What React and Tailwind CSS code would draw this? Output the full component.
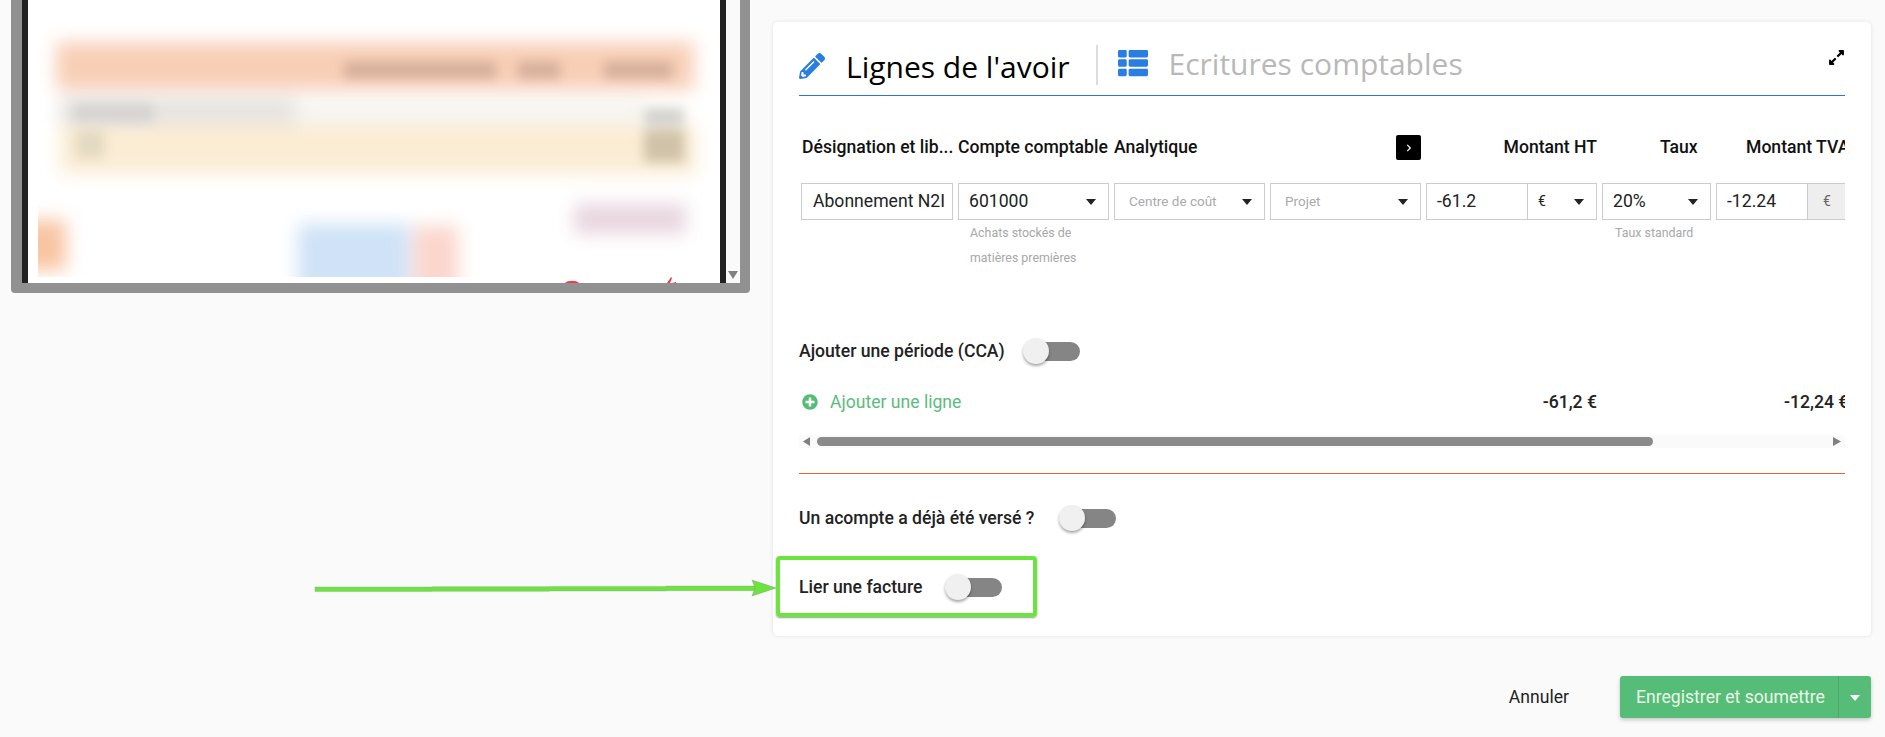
import React from "react";
import { FaPencilAlt, FaThList, FaExpandAlt, FaPlusCircle, FaChevronRight } from "react-icons/fa";

const Caret = ({ className = "text-[#222]" }) => (
  <svg width="10" height="6" viewBox="0 0 10 6" className={`shrink-0 ${className}`}>
    <path d="M0 0h10L5 6z" fill="currentColor" />
  </svg>
);

const Toggle = () => (
  <div className="relative h-[26px] w-[57px] shrink-0">
    <div className="absolute left-[6px] top-[4px] h-[19px] w-[51px] rounded-full bg-[#858585]" />
    <div className="absolute left-0 top-0 h-[26px] w-[26px] rounded-full bg-[#f0f0f0] shadow-[0_2px_3px_rgba(0,0,0,0.35)]" />
  </div>
);

const SelectBox = ({ value, placeholder }) => (
  <div className="flex h-[37px] items-center justify-between border border-[#ccc] bg-white pl-[10px] pr-[12px]">
    {placeholder ? (
      <span className="pl-[4px] text-[13.5px] text-[#aaa]">{placeholder}</span>
    ) : (
      <span className="text-[17.6px] text-[#222]">{value}</span>
    )}
    <Caret />
  </div>
);

const Hint = ({ children }) => (
  <div className="text-[12.4px] leading-[25px] text-[#a8a8a8]">{children}</div>
);

// Blurred invoice preview, coordinates are the ones of the page
const BlurredInvoice = () => (
  <svg viewBox="28 0 692 283" width="692" height="283" className="block">
    <defs>
      <filter id="soft" x="-30%" y="-60%" width="160%" height="220%">
        <feGaussianBlur stdDeviation="9" />
      </filter>
      <filter id="softer" x="-30%" y="-60%" width="160%" height="220%">
        <feGaussianBlur stdDeviation="6" />
      </filter>
      <clipPath id="page">
        <rect x="38" y="0" width="682" height="277" />
      </clipPath>
    </defs>
    <rect x="28" y="0" width="692" height="283" fill="#fff" />
    <g clipPath="url(#page)">
      <g filter="url(#soft)">
        <rect x="56" y="42" width="638" height="48" fill="#f8cfb6" />
        <rect x="60" y="98" width="240" height="28" fill="#e5e3e1" />
        <rect x="296" y="98" width="350" height="28" fill="#f7f5f3" />
        <rect x="60" y="124" width="636" height="50" fill="#fbecd4" />
        <rect x="574" y="204" width="112" height="30" fill="#e8d6df" />
        <rect x="298" y="224" width="112" height="70" fill="#cfe2f7" />
        <rect x="414" y="226" width="44" height="70" fill="#fbd6cc" />
        <rect x="20" y="220" width="46" height="50" fill="#f8c5a2" />
      </g>
      <g filter="url(#softer)">
        <rect x="344" y="62" width="152" height="16" fill="#d3ae9a" />
        <rect x="518" y="62" width="42" height="16" fill="#d3ae9a" />
        <rect x="604" y="62" width="68" height="16" fill="#d3ae9a" />
        <rect x="74" y="104" width="80" height="18" fill="#d5d3d1" />
        <rect x="644" y="108" width="40" height="18" fill="#d3d1cd" />
        <rect x="644" y="130" width="40" height="32" fill="#cfc2a8" />
        <rect x="76" y="130" width="28" height="28" fill="#e3d9c2" />
      </g>
    </g>
    <rect x="28" y="277" width="692" height="6" fill="#fff" />
    <path d="M565 283c3-3 11-3 14 0z" fill="#ef3b4b" />
    <path d="M667 283l4-6 1 1-2 5zM672 283l4-1v1z" fill="#ef3b4b" />
  </svg>
);

const PreviewPanel = () => (
  <div className="ml-[11px] flex h-[293px] w-[739px] shrink-0 rounded-b-[4px] bg-[#919191] px-[10px] pb-[10px] pl-[11px]">
    <div className="flex h-full flex-1 border-x-[6px] border-[#222] bg-white">
      <BlurredInvoice />
    </div>
    <div className="relative h-full w-[14px] bg-[#fafafa]">
      <svg width="10" height="8" viewBox="0 0 10 8" className="absolute bottom-[4px] left-[2px]">
        <path d="M0 0h10L5 8z" fill="#808080" />
      </svg>
    </div>
  </div>
);

const AccountingLines = () => (
  <div className="overflow-hidden">
    <div className="grid w-[1090px] grid-cols-[152px_151px_151px_151px_171px_109px_170px] gap-x-[5px] pl-[2px]">
      {/* column titles */}
      <div className="flex h-[25px] items-center whitespace-nowrap pl-[1px] text-[17.6px] font-medium text-[#111]">Désignation et lib...</div>
      <div className="flex h-[25px] items-center whitespace-nowrap text-[17.6px] font-medium text-[#111]">Compte comptable</div>
      <div className="col-span-2 flex h-[25px] items-center justify-between text-[17.6px] font-medium text-[#111]">
        Analytique
        <button className="flex h-[25px] w-[25px] items-center justify-center rounded-[2px] bg-black text-white">
          <FaChevronRight className="text-[8px]" />
        </button>
      </div>
      <div className="flex h-[25px] items-center justify-end text-[17.6px] font-medium text-[#111]">Montant HT</div>
      <div className="flex h-[25px] items-center pl-[58px] text-[17.6px] font-medium text-[#111]">Taux</div>
      <div className="flex h-[25px] items-center whitespace-nowrap pl-[30px] text-[17.6px] font-medium text-[#111]">Montant TVA</div>

      {/* first line */}
      <div className="col-span-7 h-[23px]" />
      <div className="flex h-[37px] items-center overflow-hidden whitespace-nowrap border border-[#ccc] bg-white pl-[11px] text-[17.6px] text-[#222]">
        Abonnement N2I
      </div>
      <div>
        <SelectBox value="601000" />
        <div className="pl-[12px]">
          <Hint>Achats stockés de</Hint>
          <Hint>matières premières</Hint>
        </div>
      </div>
      <SelectBox placeholder="Centre de coût" />
      <SelectBox placeholder="Projet" />
      <div className="flex h-[37px] border border-[#ccc] bg-white text-[17.6px] text-[#222]">
        <div className="flex w-[101px] items-center border-r border-[#ccc] pl-[10px]">-61.2</div>
        <div className="flex flex-1 items-center justify-between pl-[10px] pr-[12px]">
          <span className="text-[14px]">€</span>
          <Caret />
        </div>
      </div>
      <div>
        <SelectBox value="20%" />
        <div className="pl-[13px]">
          <Hint>Taux standard</Hint>
        </div>
      </div>
      <div className="flex h-[37px] border border-[#ccc] bg-white text-[17.6px] text-[#222]">
        <div className="flex w-[90px] items-center pl-[10px]">-12.24</div>
        <div className="flex flex-1 items-center border-l border-[#ccc] bg-[#eee] pl-[15px] text-[14px] text-[#666]">€</div>
      </div>
    </div>
  </div>
);

const Totals = () => (
  <div className="mt-[25px] overflow-hidden">
    <div className="grid h-[26px] w-[1090px] grid-cols-[152px_151px_151px_151px_171px_109px_170px] items-center gap-x-[5px] pl-[2px] text-[17.6px] font-medium text-[#222]">
      <div className="col-span-4 flex items-center gap-[12px] pl-[1px] font-normal text-[#5cbb7c]">
        <FaPlusCircle className="text-[16px] text-[#56bd78]" />
        Ajouter une ligne
      </div>
      <div className="text-right">-61,2 €</div>
      <div />
      <div className="whitespace-nowrap pl-[68px]">-12,24 €</div>
    </div>
  </div>
);

const HScrollbar = () => (
  <div className="mt-[20px] flex h-[13px] items-center bg-[#fafafa] pl-[4px] pr-[4px]">
    <svg width="7" height="9" viewBox="0 0 7 9" className="shrink-0">
      <path d="M7 0v9L0 4.5z" fill="#808080" />
    </svg>
    <div className="ml-[7px] h-[9px] w-[836px] rounded-full bg-[#8a8a8a]" />
    <svg width="8" height="9" viewBox="0 0 8 9" className="ml-auto shrink-0">
      <path d="M0 0v9l8-4.5z" fill="#808080" />
    </svg>
  </div>
);

const CreditNoteCard = () => (
  <div className="h-[614px] w-[1098px] rounded-[5px] bg-white px-[26px] pt-[23px] shadow-[0_0_4px_rgba(0,0,0,0.1)] [font-family:Roboto,sans-serif]">
    {/* tabs */}
    <div className="relative box-content flex h-[50px] items-start border-b border-[#2f78c4]">
      <FaPencilAlt className="mt-[8px] text-[26px] text-[#2a7de1]" />
      <span className="ml-[21px] mt-[2px] whitespace-nowrap text-[30px] leading-[40px] text-black [font-family:'Open_Sans',sans-serif]">Lignes de l'avoir</span>
      <div className="ml-[26px] h-[40px] w-[2px] bg-[#ddd]" />
      <FaThList className="ml-[20px] mt-[3px] text-[30px] text-[#2a7de1]" />
      <span className="ml-[21px] whitespace-nowrap text-[30px] leading-[38px] text-[#b8b8b8] [font-family:'Open_Sans',sans-serif]">Ecritures comptables</span>
      <FaExpandAlt className="absolute right-0 top-[4px] text-[17px] text-black" />
    </div>

    <div className="mt-[39px]">
      <AccountingLines />
    </div>

    {/* 271 -> 339 */}
    <div className="mt-[68px] flex h-[26px] items-center text-[17.6px] font-medium text-[#222]">
      Ajouter une période (CCA)
      <div className="ml-[18px]">
        <Toggle />
      </div>
    </div>

    <Totals />
    <HScrollbar />
    <div className="mt-[25px] h-px bg-[#dd6a2e]" />

    <div className="mt-[31px] flex h-[26px] items-center text-[17.6px] font-medium text-[#222]">
      Un acompte a déjà été versé ?
      <div className="ml-[25px]">
        <Toggle />
      </div>
    </div>

    <div className="relative mt-[43px] flex h-[26px] items-center text-[17.6px] font-medium text-[#222]">
      Lier une facture
      <div className="ml-[23px]">
        <Toggle />
      </div>
      {/* annotation on the screenshot */}
      <div className="absolute left-[-23px] top-[-18px] h-[61px] w-[261px] rounded-[4px] border-[4px] border-[#6be53d] shadow-[0_1px_2px_rgba(0,0,0,0.4)]" />
    </div>
  </div>
);

const Footer = () => (
  <div className="mt-[40px] flex items-center justify-end [font-family:Roboto,sans-serif]">
    <button className="text-[17.6px] text-[#222]">Annuler</button>
    <div className="ml-[51px] flex h-[42px] w-[251px] rounded-[3px] bg-[#56bd78] text-[17.6px] text-[#eaf7e6] shadow-[0_2px_4px_rgba(0,0,0,0.2)]">
      <div className="flex flex-1 items-center whitespace-nowrap border-r border-[#4ea96c] pl-[16px]">Enregistrer et soumettre</div>
      <div className="flex w-[32px] items-center justify-center pt-[2px]">
        <Caret className="text-white" />
      </div>
    </div>
  </div>
);

export default function App() {
  return (
    <div className="relative flex h-[737px] w-[1885px] overflow-hidden bg-[#fafafa]">
      <PreviewPanel />
      <div className="ml-[23px] pt-[22px]">
        <CreditNoteCard />
        <Footer />
      </div>

      {/* green arrow drawn over the screenshot */}
      <svg width="464" height="20" viewBox="0 0 464 20" className="absolute left-[314px] top-[579px]">
        <path d="M1 8h117v-.3h117v-.3h117v-.3h100v4.6h-100v.3h-117v.3h-117v.3H1z" fill="#6be53d" stroke="#999" strokeWidth="0.4" />
        <path d="M438 1l24 8-24 8 3-8z" fill="#6be53d" stroke="#8a8a8a" strokeWidth="0.4" />
      </svg>
    </div>
  );
}
